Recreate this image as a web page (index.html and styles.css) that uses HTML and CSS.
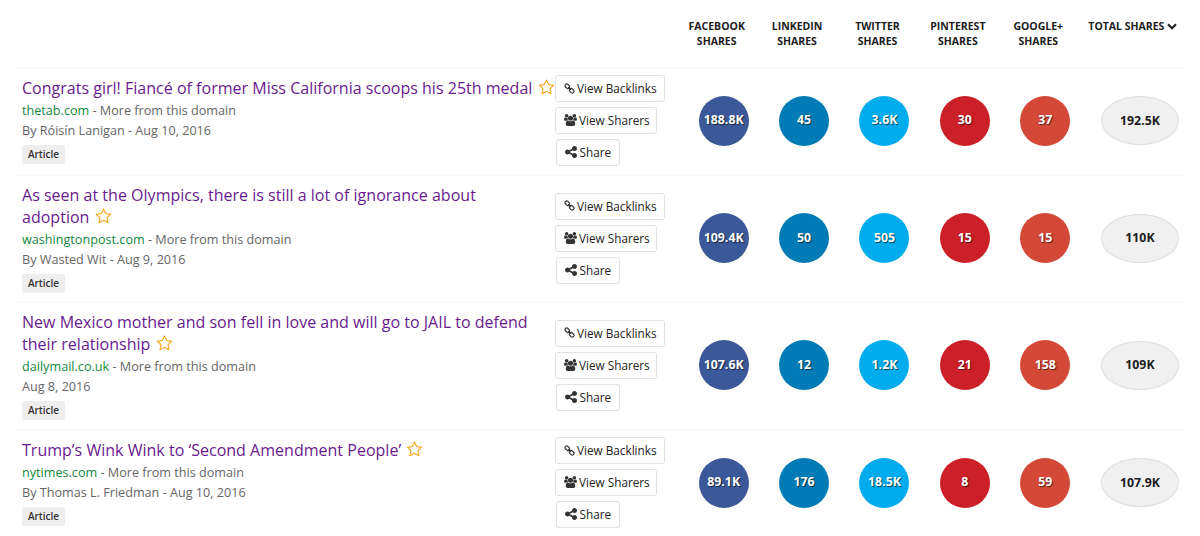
FILE: index.html
```html
<!DOCTYPE html>
<html lang="en">
<head>
<meta charset="utf-8">
<title>Most shared content</title>
<link rel="stylesheet" href="styles.css">
</head>
<body>
<svg class="sprite" aria-hidden="true">
  <symbol id="star" viewBox="0 0 1792 1792"><path d="M1201 1004l306-297-422-62-189-382-189 382-422 62 306 297-73 421 378-199 377 199zm527-357q0 22-26 48l-363 354 86 500q1 7 1 20 0 50-41 50-19 0-40-12l-449-236-449 236q-22 12-40 12-21 0-31.500-14.500t-10.500-35.500q0-6 2-20l86-500-364-354q-25-27-25-48 0-37 56-46l502-73 225-455q19-41 49-41t49 41l225 455 502 73q56 9 56 46z"/></symbol>
  <symbol id="link" viewBox="0 0 12 12"><g fill="none" stroke="currentColor" stroke-width="1.3" stroke-linecap="round"><rect x="0.9" y="1.6" width="5.4" height="3.8" rx="1.7" transform="rotate(45 3.6 3.5)"/><rect x="5.7" y="6.6" width="5.4" height="3.8" rx="1.7" transform="rotate(45 8.4 8.5)"/><path d="M4.7 4.7L7.3 7.3"/></g></symbol>
  <symbol id="users" viewBox="0 0 1920 1792"><path d="M593 896q-162 5-265 128h-134q-82 0-138-40.500t-56-118.500q0-353 124-353 6 0 43.500 21t97.500 42.500 119 21.500q67 0 133-23-5 37-5 66 0 139 81 256zm1071 637q0 120-73 189.500t-194 69.500h-874q-121 0-194-69.500t-73-189.500q0-53 3.500-103.500t14-109 26.500-108.500 43-97.500 62-81 85.500-53.500 111.500-20q10 0 43 21.500t73 48 107 48 135 21.500 135-21.500 107-48 73-48 43-21.500q61 0 111.500 20t85.500 53.500 62 81 43 97.500 26.500 108.500 14 109 3.500 103.500zm-1024-1277q0 106-75 181t-181 75-181-75-75-181 75-181 181-75 181 75 75 181zm704 384q0 159-112.500 271.500t-271.500 112.500-271.500-112.500-112.500-271.500 112.500-271.500 271.500-112.500 271.500 112.500 112.500 271.500zm576 225q0 78-56 118.500t-138 40.500h-134q-103-123-265-128 81-117 81-256 0-29-5-66 66 23 133 23 59 0 119-21.500t97.500-42.500 43.500-21q124 0 124 353zm-128-609q0 106-75 181t-181 75-181-75-75-181 75-181 181-75 181 75 75 181z"/></symbol>
  <symbol id="share" viewBox="128 128 1536 1536"><path d="M1344 1024q133 0 226.500 93.500t93.500 226.500-93.500 226.500-226.500 93.500-226.500-93.500-93.500-226.500q0-12 2-34l-360-180q-92 86-218 86-133 0-226.500-93.500t-93.500-226.500 93.500-226.500 226.500-93.500q126 0 218 86l360-180q-2-22-2-34 0-133 93.500-226.500t226.500-93.500 226.500 93.500 93.500 226.500-93.500 226.500-226.500 93.500q-126 0-218-86l-360 180q2 22 2 34t-2 34l360 180q92-86 218-86z"/></symbol>
</svg>
<main class="table">
  <header class="head">
    <div class="col">FACEBOOK<br>SHARES</div>
    <div class="col">LINKEDIN<br>SHARES</div>
    <div class="col">TWITTER<br>SHARES</div>
    <div class="col">PINTEREST<br>SHARES</div>
    <div class="col">GOOGLE+<br>SHARES</div>
    <div class="col total-col">TOTAL SHARES <svg class="chevron" viewBox="0 0 10 7"><path d="M1 1.2L5 5.2L9 1.2"/></svg></div>
  </header>

  <article class="row">
    <div class="info">
      <h2 class="title">Congrats girl! Fiancé of former Miss California scoops his 25th medal <svg class="star"><use href="#star"/></svg></h2>
      <p class="meta"><a class="domain">thetab.com</a> - More from this domain</p>
      <p class="meta">By Róisín Lanigan - Aug 10, 2016</p>
      <span class="tag">Article</span>
    </div>
    <div class="actions">
      <a class="btn b1"><svg class="i-link"><use href="#link"/></svg>View Backlinks</a>
      <a class="btn b2"><svg class="i-users"><use href="#users"/></svg>View Sharers</a>
      <a class="btn b3"><svg class="i-share"><use href="#share"/></svg>Share</a>
    </div>
    <div class="cell"><span class="dot facebook">188.8K</span></div>
    <div class="cell"><span class="dot linkedin">45</span></div>
    <div class="cell"><span class="dot twitter">3.6K</span></div>
    <div class="cell"><span class="dot pinterest">30</span></div>
    <div class="cell"><span class="dot google">37</span></div>
    <div class="cell total-cell"><span class="total">192.5K</span></div>
  </article>

  <article class="row tall">
    <div class="info">
      <h2 class="title">As seen at the Olympics, there is still a lot of ignorance about<br>adoption <svg class="star"><use href="#star"/></svg></h2>
      <p class="meta"><a class="domain">washingtonpost.com</a> - More from this domain</p>
      <p class="meta">By Wasted Wit - Aug 9, 2016</p>
      <span class="tag">Article</span>
    </div>
    <div class="actions">
      <a class="btn b1"><svg class="i-link"><use href="#link"/></svg>View Backlinks</a>
      <a class="btn b2"><svg class="i-users"><use href="#users"/></svg>View Sharers</a>
      <a class="btn b3"><svg class="i-share"><use href="#share"/></svg>Share</a>
    </div>
    <div class="cell"><span class="dot facebook">109.4K</span></div>
    <div class="cell"><span class="dot linkedin">50</span></div>
    <div class="cell"><span class="dot twitter">505</span></div>
    <div class="cell"><span class="dot pinterest">15</span></div>
    <div class="cell"><span class="dot google">15</span></div>
    <div class="cell total-cell"><span class="total">110K</span></div>
  </article>

  <article class="row tall">
    <div class="info">
      <h2 class="title">New Mexico mother and son fell in love and will go to JAIL to defend<br>their relationship <svg class="star"><use href="#star"/></svg></h2>
      <p class="meta"><a class="domain">dailymail.co.uk</a> - More from this domain</p>
      <p class="meta">Aug 8, 2016</p>
      <span class="tag">Article</span>
    </div>
    <div class="actions">
      <a class="btn b1"><svg class="i-link"><use href="#link"/></svg>View Backlinks</a>
      <a class="btn b2"><svg class="i-users"><use href="#users"/></svg>View Sharers</a>
      <a class="btn b3"><svg class="i-share"><use href="#share"/></svg>Share</a>
    </div>
    <div class="cell"><span class="dot facebook">107.6K</span></div>
    <div class="cell"><span class="dot linkedin">12</span></div>
    <div class="cell"><span class="dot twitter">1.2K</span></div>
    <div class="cell"><span class="dot pinterest">21</span></div>
    <div class="cell"><span class="dot google">158</span></div>
    <div class="cell total-cell"><span class="total">109K</span></div>
  </article>

  <article class="row">
    <div class="info">
      <h2 class="title">Trump’s Wink Wink to ‘Second Amendment People’ <svg class="star"><use href="#star"/></svg></h2>
      <p class="meta"><a class="domain">nytimes.com</a> - More from this domain</p>
      <p class="meta">By Thomas L. Friedman - Aug 10, 2016</p>
      <span class="tag">Article</span>
    </div>
    <div class="actions">
      <a class="btn b1"><svg class="i-link"><use href="#link"/></svg>View Backlinks</a>
      <a class="btn b2"><svg class="i-users"><use href="#users"/></svg>View Sharers</a>
      <a class="btn b3"><svg class="i-share"><use href="#share"/></svg>Share</a>
    </div>
    <div class="cell"><span class="dot facebook">89.1K</span></div>
    <div class="cell"><span class="dot linkedin">176</span></div>
    <div class="cell"><span class="dot twitter">18.5K</span></div>
    <div class="cell"><span class="dot pinterest">8</span></div>
    <div class="cell"><span class="dot google">59</span></div>
    <div class="cell total-cell"><span class="total">107.9K</span></div>
  </article>
</main>
</body>
</html>
```
FILE: styles.css
```css
* { box-sizing: border-box; }
body {
  margin: 0;
  background: #fff;
  font-family: "Open Sans", sans-serif;
  color: #1c1c1c;
  overflow: hidden;
}
.sprite { display: none; }
svg { fill: currentColor; }
.table { width: 1170px; margin-left: 15px; }
.head, .row {
  display: grid;
  grid-template-columns: 540px 121.5px repeat(5, 80.4px) 1fr;
}
.head { height: 67px; padding-top: 19px; }
.head .col:first-child { grid-column: 3; }
.col {
  text-align: center;
  font-size: 10.5px;
  line-height: 14.5px;
  font-weight: 700;
  white-space: nowrap;
}
.total-col { padding-left: 2px; }
.chevron { width: 10px; height: 7px; }
.chevron path { fill: none; stroke: #222; stroke-width: 2.2; }
.row {
  height: 108px;
  padding-bottom: 2px;
  border-top: 1px solid #f7f7f7;
  align-items: center;
}
.tall { height: 127px; }
.info { align-self: start; padding: 9px 0 0 7px; }
.tall .info { padding-top: 8px; }
.title {
  margin: 0 0 2px;
  font-size: 16.05px;
  line-height: 22px;
  font-weight: 400;
  color: #6a1b8f;
  white-space: nowrap;
}
.star { width: 17px; height: 17px; margin-left: 1px; vertical-align: -2px; color: #f9a825; }
.meta { margin: 0; font-size: 12.63px; line-height: 20.4px; color: #666; white-space: nowrap; }
.domain { color: #13893f; }
.tag {
  display: block;
  width: 43px;
  height: 19px;
  margin-top: 3px;
  background: #eee;
  border-radius: 2px;
  font-size: 10px;
  line-height: 18px;
  font-weight: 600;
  text-align: center;
  color: #333;
}
.actions { display: flex; flex-direction: column; align-items: flex-start; gap: 5px; }
.btn {
  display: flex;
  align-items: center;
  height: 27px;
  padding: 0 0 1px 8px;
  border: 1px solid #e2e2e6;
  border-radius: 3px;
  background: #fff;
  font-size: 11.75px;
  color: #222;
  white-space: nowrap;
}
.btn svg { color: #333; flex: none; }
.b1 { width: 110px; }
.b2 { width: 102px; }
.b3 { width: 64px; margin-left: 0.5px; }
.i-link { width: 11px; height: 11px; margin-right: 2px; }
.i-users { width: 13px; height: 12px; margin-right: 2px; }
.i-share { width: 12px; height: 12px; margin-right: 3px; }
.cell { display: flex; justify-content: center; padding-left: 14px; }
.dot {
  flex: none;
  width: 50px;
  height: 50px;
  border-radius: 50%;
  display: flex;
  align-items: center;
  justify-content: center;
  padding-bottom: 2px;
  font-size: 12.3px;
  font-weight: 700;
  color: #fff;
  text-shadow: 1px 1px 1px rgba(0, 0, 0, 0.6);
}
.facebook { background: #3b5998; }
.linkedin { background: #007bb6; }
.twitter { background: #00aced; }
.pinterest { background: #cb2027; }
.google { background: #d34836; }
.total-cell { padding-left: 22.5px; justify-content: flex-start; }
.total {
  flex: none;
  width: 78px;
  height: 49px;
  border: 1px solid #ddd;
  border-radius: 50%;
  background: #f0f0f0;
  display: flex;
  align-items: center;
  justify-content: center;
  padding-bottom: 1px;
  font-size: 12.3px;
  font-weight: 700;
}
```
